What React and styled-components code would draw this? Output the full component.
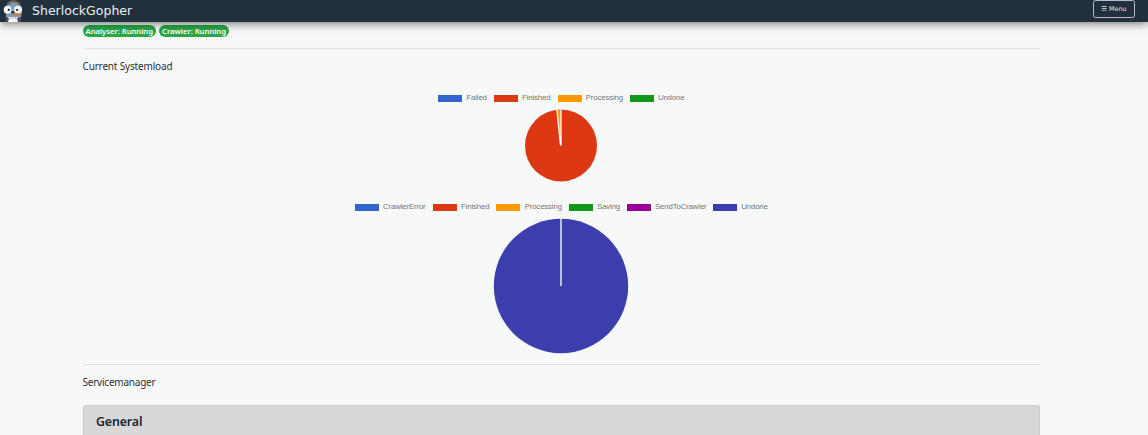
import React from "react";
import styled, { createGlobalStyle } from "styled-components";

const GlobalStyle = createGlobalStyle`
  * { box-sizing: border-box; }
  body {
    margin: 0;
    background: #f7f9f9;
    color: #2b2f33;
    font-family: "Noto Sans", "Open Sans", sans-serif;
  }
`;

const Navbar = styled.header`
  position: relative;
  z-index: 1;
  display: flex;
  align-items: flex-start;
  height: 22px;
  padding: 0 13px 0 3px;
  background: #222f3d;
  box-shadow: 0 2px 9px rgba(0, 0, 0, 0.5);
`;

const Logo = styled.svg`
  display: block;
  width: 20px;
  height: 22px;
`;

const Brand = styled.span`
  margin-left: 9px;
  color: #eef0f1;
  font: 12.5px/22px "DejaVu Sans", sans-serif;
  letter-spacing: 0.02px;
`;

const MenuButton = styled.button`
  display: flex;
  align-items: center;
  justify-content: center;
  gap: 2px;
  width: 42px;
  height: 18px;
  margin-left: auto;
  padding: 0;
  border: 1px solid #b9bec3;
  border-radius: 2.5px;
  background: transparent;
  color: #e4e7e9;
  font: 6.4px/16px "DejaVu Sans", sans-serif;
`;

const Page = styled.main`
  width: 957.5px;
  margin-left: 82.5px;
`;

const Badges = styled.div`
  display: flex;
  gap: 3px;
  padding-top: 3px;
`;

const Badge = styled.span`
  width: ${(p) => p.$width}px;
  height: 12px;
  border-radius: 6px;
  background: #28a745;
  color: #fff;
  font-size: 7.7px;
  font-weight: 600;
  line-height: 12px;
  text-align: center;
  white-space: nowrap;
  letter-spacing: ${(p) => p.$spacing}px;
`;

const Divider = styled.hr`
  height: 1px;
  margin: ${(p) => p.$top}px 0 0;
  border: 0;
  background: #e2e4e4;
`;

const Heading = styled.p`
  margin: 10px 0 0;
  font-size: 10px;
  line-height: 15px;
  letter-spacing: ${(p) => p.$spacing}px;
`;

const Chart = styled.section`
  display: flex;
  flex-direction: column;
  align-items: center;
  margin-top: ${(p) => p.$top}px;
`;

const Legend = styled.ul`
  display: flex;
  height: 10px;
  margin: 0;
  padding: 0;
  list-style: none;
`;

const LegendItem = styled.li`
  display: flex;
  align-items: center;
  flex: none;
  width: ${(p) => p.$width}px;
  color: #747575;
  font: 7.8px/10px "Liberation Sans", Arial, sans-serif;
  letter-spacing: -0.14px;
  white-space: nowrap;
`;

const Swatch = styled.span`
  width: 24px;
  height: 6.4px;
  margin: 1px 4.3px 0 0;
  background: ${(p) => p.$color};
`;

const Pie = styled.svg`
  display: block;
  width: ${(p) => p.$size}px;
  height: ${(p) => p.$size}px;
  margin: ${(p) => p.$top}px 0 0;
`;

const CardHeader = styled.div`
  height: 30px;
  margin-top: 15px;
  padding: 5px 12.5px;
  border: 1px solid #c9cbcc;
  border-bottom: 0;
  border-radius: 3px 3px 0 0;
  background: #d6d8d9;
  font-size: 12.4px;
  font-weight: 600;
  line-height: 22px;
  letter-spacing: -0.15px;
  color: #212529;
`;

const queue = [
  ["Failed", "#3366cc", 55.7],
  ["Finished", "#dc3912", 63.7],
  ["Processing", "#ff9900", 72.2],
  ["Undone", "#109618", 54.7],
];

const tasks = [
  ["CrawlerError", "#3366cc", 78],
  ["Finished", "#dc3912", 63.6],
  ["Processing", "#ff9900", 72.4],
  ["Saving", "#109618", 58],
  ["SendToCrawler", "#990099", 86.4],
  ["Undone", "#3b3eac", 54.6],
];

function ChartLegend({ items }) {
  return (
    <Legend>
      {items.map(([name, color, width]) => (
        <LegendItem key={name} $width={width}>
          <Swatch $color={color} />
          {name}
        </LegendItem>
      ))}
    </Legend>
  );
}

function GopherLogo() {
  return (
    <Logo viewBox="0 0 20 22" aria-hidden="true">
      <path d="M3 8 Q3 3 10 3 Q19 3 19 10 L18 18 H3 Z" fill="#79a0c0" />
      <path d="M3 4.5 Q6 0 11 0 Q17 1 18 5 L11 4 Z" fill="#655f5d" />
      <path d="M6 2 L14 3 L16 5 L9 4 Z" fill="#a39489" />
      <circle cx="4.6" cy="9.7" r="3.9" fill="#f5f5f3" />
      <circle cx="15" cy="9.8" r="4.1" fill="#f5f5f3" />
      <circle cx="5.8" cy="9.8" r="1.1" fill="#15191d" />
      <circle cx="14" cy="10" r="1.1" fill="#15191d" />
      <ellipse cx="9.8" cy="12.2" rx="1.8" ry="1.3" fill="#343434" />
      <path d="M9 14 L13 13 L18 13.5 L17 16 L11 16 Z" fill="#b98457" />
      <path d="M4 22 L5 17 H15 L16 22 Z" fill="#fafafa" />
      <path d="M7.2 17 V19 M9.9 17 V19 M12.6 17 V19" stroke="#777d82" strokeWidth=".6" />
      <path d="M2 22 L3 17 L6 18 L5 22 Z M14 18 L18 17 L18.5 22 H15 Z" fill="#4a4b4e" />
    </Logo>
  );
}

export default function App() {
  return (
    <>
      <GlobalStyle />
      <Navbar>
        <GopherLogo />
        <Brand>SherlockGopher</Brand>
        <MenuButton><span>☰</span><span>Menu</span></MenuButton>
      </Navbar>
      <Page>
        <Badges>
          <Badge $width={73.5} $spacing={-0.05}>Analyser: Running</Badge>
          <Badge $width={70} $spacing={-0.05}>Crawler: Running</Badge>
        </Badges>
        <Divider $top={11} />
        <Heading $spacing={-0.17}>Current Systemload</Heading>
        <Chart $top={19}>
          <ChartLegend items={queue} />
          <Pie $size={74} $top={6} viewBox="-37 -36.6 74 74">
            <circle r="36" fill="#dc3912" />
            <path d="M0 0 L-4.1 -35.8 A36 36 0 0 1 0 -36 Z" fill="#ff9900" />
            <path d="M-4.1 -36 L-.4 0 M0 -36.5 V0" stroke="#fff" strokeWidth="1.3" fill="none" />
          </Pie>
        </Chart>
        <Chart $top={19}>
          <ChartLegend items={tasks} />
          <Pie $size={136} $top={6} viewBox="-68 -68 136 136">
            <circle r="67.2" fill="#3b3eac" />
            <path d="M0 -68 V0" stroke="#e8e8f5" strokeWidth="1.5" />
          </Pie>
        </Chart>
        <Divider $top={10} />
        <Heading $spacing={-0.22}>Servicemanager</Heading>
        <CardHeader>General</CardHeader>
      </Page>
    </>
  );
}
